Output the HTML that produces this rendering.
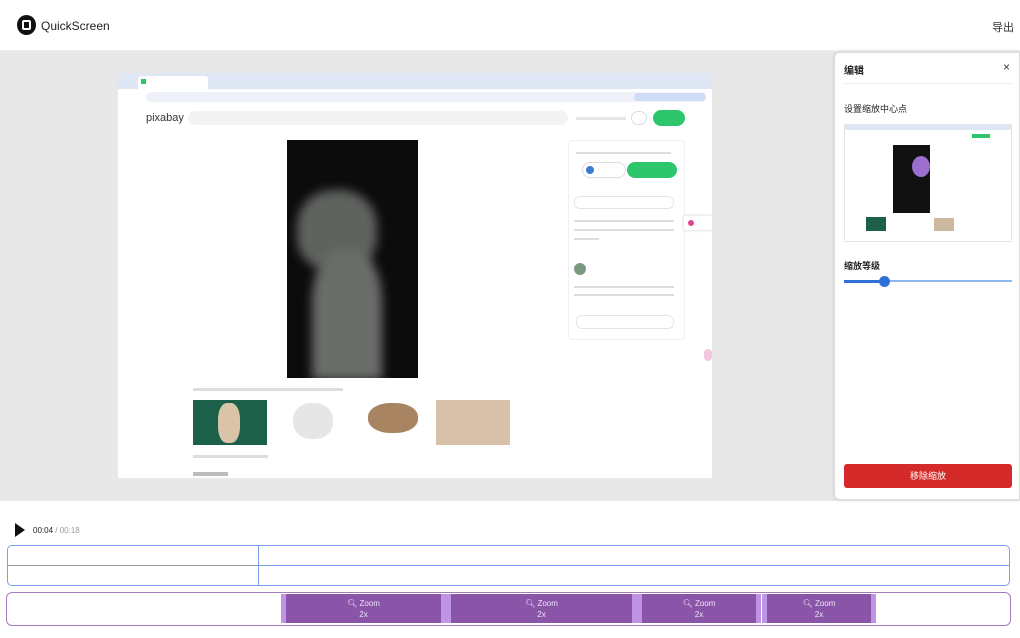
<!DOCTYPE html><html><head><meta charset="utf-8"><style>
*{box-sizing:border-box;margin:0;padding:0}
body{width:1020px;height:638px;overflow:hidden;background:#fff;font-family:"Liberation Sans","Noto Sans CJK SC",sans-serif;position:relative}
.a{position:absolute}
.seg{position:absolute;top:594px;height:29px;background:#8a55a8;border-left:5px solid #bf94e4;border-right:5px solid #bf94e4;color:#f0e6f7;font-size:8px;text-align:center;line-height:11px;padding-top:4px}
.l{position:absolute;height:3px;background:#ddd}
</style></head><body>
<div class="a" style="left:0;top:0;width:1020px;height:51px;background:#fff;border-bottom:1px solid #eee"></div>
<div class="a" style="left:17px;top:15px;width:19px;height:20px;border-radius:50%;background:#111"></div>
<div class="a" style="left:22px;top:20px;width:9px;height:10px;border:2px solid #fff;border-radius:2px"></div>
<div class="a" style="left:41px;top:19px;font-size:12px;color:#222">QuickScreen</div>
<div class="a" style="left:992px;top:19px;font-size:11px;color:#333">导出</div>
<div class="a" style="left:0;top:51px;width:1020px;height:450px;background:#e8e8e8"></div>
<div class="a" style="left:118px;top:73px;width:594px;height:405px;background:#fff;overflow:hidden">
 <div class="a" style="left:0;top:0;width:594px;height:16px;background:#dfe7f5"></div>
 <div class="a" style="left:20px;top:3px;width:70px;height:13px;background:#fff;border-radius:3px 3px 0 0"></div>
 <div class="a" style="left:23px;top:6px;width:5px;height:5px;background:#2ec66d"></div>
 <div class="a" style="left:0;top:16px;width:594px;height:15px;background:#fff"></div>
 <div class="a" style="left:28px;top:19px;width:560px;height:10px;background:#eef1f7;border-radius:5px"></div>
 <div class="a" style="left:516px;top:20px;width:72px;height:8px;background:#cfdcf5;border-radius:4px"></div>
 <div class="a" style="left:28px;top:39px;font-size:11px;color:#333">pixabay</div>
 <div class="a" style="left:70px;top:38px;width:380px;height:14px;background:#f3f3f3;border-radius:7px"></div>
 <div class="l" style="left:458px;top:44px;width:50px;background:#e6e6e6"></div>
 <div class="a" style="left:535px;top:37px;width:32px;height:16px;background:#2ec66d;border-radius:8px"></div>
 <div class="a" style="left:513px;top:38px;width:16px;height:14px;border:1px solid #ddd;border-radius:7px"></div>
 <div class="a" style="left:169px;top:67px;width:131px;height:238px;background:#0c0c0c;overflow:hidden">
  <div class="a" style="left:10px;top:50px;width:80px;height:80px;background:#5f625f;border-radius:45% 45% 40% 40%;filter:blur(5px)"></div>
  <div class="a" style="left:25px;top:110px;width:70px;height:130px;background:#6a6d6a;border-radius:40% 40% 0 0;filter:blur(5px)"></div>
 </div>
 <div class="a" style="left:450px;top:67px;width:117px;height:200px;border:1px solid #f0f0f0;border-radius:4px"></div>
 <div class="l" style="left:458px;top:79px;width:95px;height:2px"></div>
 <div class="a" style="left:464px;top:89px;width:44px;height:16px;border:1px solid #ddd;border-radius:8px"></div>
 <div class="a" style="left:468px;top:93px;width:8px;height:8px;background:#3a7bd5;border-radius:50%"></div>
 <div class="a" style="left:509px;top:89px;width:50px;height:16px;background:#2ec66d;border-radius:8px"></div>
 <div class="a" style="left:456px;top:123px;width:100px;height:13px;border:1px solid #e5e5e5;border-radius:6px"></div>
 <div class="l" style="left:456px;top:147px;width:100px;height:2px"></div>
 <div class="l" style="left:456px;top:156px;width:100px;height:2px"></div>
 <div class="l" style="left:456px;top:165px;width:25px;height:2px"></div>
 <div class="a" style="left:566px;top:143px;width:28px;height:14px;background:#fff;box-shadow:0 0 3px #ccc"></div>
 <div class="a" style="left:570px;top:147px;width:6px;height:6px;background:#e0468a;border-radius:50%"></div>
 <div class="a" style="left:456px;top:190px;width:12px;height:12px;background:#7a9a80;border-radius:50%"></div>
 <div class="l" style="left:456px;top:213px;width:100px;height:2px"></div>
 <div class="l" style="left:456px;top:221px;width:100px;height:2px"></div>
 <div class="a" style="left:458px;top:242px;width:98px;height:14px;border:1px solid #e5e5e5;border-radius:6px"></div>
 <div class="a" style="left:586px;top:276px;width:8px;height:12px;background:#f3c6e0;border-radius:4px"></div>
 <div class="l" style="left:75px;top:315px;width:150px"></div>
 <div class="a" style="left:75px;top:327px;width:74px;height:45px;background:#1d6049"></div>
 <div class="a" style="left:100px;top:330px;width:22px;height:40px;background:#d9c4a8;border-radius:40%"></div>
 <div class="a" style="left:175px;top:330px;width:40px;height:36px;background:#e6e6e6;border-radius:45%"></div>
 <div class="a" style="left:250px;top:330px;width:50px;height:30px;background:#a88463;border-radius:45%"></div>
 <div class="a" style="left:318px;top:327px;width:74px;height:45px;background:#d9c0a8"></div>
 <div class="l" style="left:75px;top:382px;width:75px"></div>
 <div class="a" style="left:75px;top:399px;width:35px;height:4px;background:#bbb"></div>
</div>
<div class="a" style="left:834px;top:52px;width:186px;height:448px;background:#fff;border:1px solid #ddd;border-radius:6px 0 0 6px;box-shadow:0 0 4px rgba(0,0,0,.1)"></div>
<div class="a" style="left:844px;top:62px;font-size:10px;font-weight:bold;color:#222">编辑</div>
<div class="a" style="left:1003px;top:60px;font-size:12px;color:#333">×</div>
<div class="a" style="left:844px;top:83px;width:168px;height:1px;background:#eee"></div>
<div class="a" style="left:844px;top:102px;font-size:9px;color:#222">设置缩放中心点</div>
<div class="a" style="left:844px;top:124px;width:168px;height:118px;background:#fff;border:1px solid #e6e6e6;overflow:hidden">
 <div class="a" style="left:0;top:0;width:168px;height:5px;background:#dfe7f5"></div>
 <div class="a" style="left:48px;top:20px;width:37px;height:68px;background:#111"></div>
 <div class="a" style="left:67px;top:31px;width:18px;height:21px;background:#9a6fd0;border-radius:50%"></div>
 <div class="a" style="left:21px;top:92px;width:20px;height:14px;background:#1d6049"></div>
 <div class="a" style="left:89px;top:93px;width:20px;height:13px;background:#cdb8a0"></div>
 <div class="a" style="left:127px;top:9px;width:18px;height:4px;background:#2ec66d"></div>
</div>
<div class="a" style="left:844px;top:259px;font-size:9px;font-weight:bold;color:#222">缩放等级</div>
<div class="a" style="left:844px;top:280px;width:168px;height:2px;background:#8fb6ef"></div>
<div class="a" style="left:844px;top:280px;width:40px;height:3px;background:#2f6fd6"></div>
<div class="a" style="left:879px;top:276px;width:11px;height:11px;background:#2f6fd6;border-radius:50%"></div>
<div class="a" style="left:844px;top:464px;width:168px;height:24px;background:#d42a2a;border-radius:3px;color:#fff;font-size:9px;text-align:center;line-height:24px">移除缩放</div>
<div class="a" style="left:15px;top:523px;width:0;height:0;border-left:10px solid #111;border-top:7px solid transparent;border-bottom:7px solid transparent"></div>
<div class="a" style="left:33px;top:526px;font-size:8px;color:#222">00:04 <span style="color:#999">/ 00:18</span></div>
<div class="a" style="left:7px;top:545px;width:1003px;height:41px;border:1px solid #7e9ef0;border-radius:5px"></div>
<div class="a" style="left:258px;top:546px;width:1px;height:39px;background:#7e9ef0"></div>
<div class="a" style="left:8px;top:565px;width:250px;height:1px;background:#999"></div>
<div class="a" style="left:259px;top:565px;width:750px;height:1px;background:#7e9ef0"></div>
<div class="a" style="left:6px;top:592px;width:1005px;height:34px;border:1px solid #a47ac0;border-radius:6px"></div>
<div class="seg" style="left:281px;width:165px">🔍︎ Zoom<br>2x</div>
<div class="seg" style="left:446px;width:191px">🔍︎ Zoom<br>2x</div>
<div class="seg" style="left:637px;width:124px">🔍︎ Zoom<br>2x</div>
<div class="seg" style="left:762px;width:114px">🔍︎ Zoom<br>2x</div>
</body></html>
